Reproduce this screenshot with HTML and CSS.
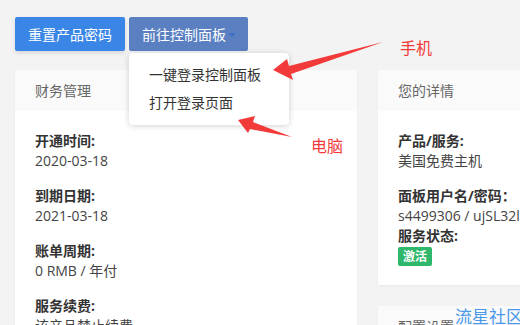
FILE: index.html
```html
<!DOCTYPE html>
<html lang="zh-CN">

<head>
    <meta charset="UTF-8">
    <meta name="viewport" content="width=device-width, initial-scale=1.0">
    <title>产品详情</title>
    <link rel="stylesheet" href="styles.css">
</head>

<body>
    <div class="page">
        <div class="toolbar">
            <a href="#" class="btn btn-primary">重置产品密码</a>
            <div class="dropdown">
                <a href="#" class="btn btn-active">前往控制面板<span class="caret"></span></a>
                <ul class="dropdown-menu">
                    <li><a href="#">一键登录控制面板</a></li>
                    <li><a href="#">打开登录页面</a></li>
                </ul>
            </div>
        </div>

        <div class="cards">
            <div class="card">
                <div class="card-header">财务管理</div>
                <div class="card-body">
                    <div class="field">
                        <div class="label">开通时间:</div>
                        <div class="value">2020-03-18</div>
                    </div>
                    <div class="field">
                        <div class="label">到期日期:</div>
                        <div class="value">2021-03-18</div>
                    </div>
                    <div class="field">
                        <div class="label">账单周期:</div>
                        <div class="value">0 RMB / 年付</div>
                    </div>
                    <div class="field">
                        <div class="label">服务续费:</div>
                        <div class="value">该产品禁止续费</div>
                    </div>
                </div>
            </div>

            <div class="column">
                <div class="card">
                    <div class="card-header">您的详情</div>
                    <div class="card-body card-body-short">
                        <div class="field">
                            <div class="label">产品/服务:</div>
                            <div class="value">美国免费主机</div>
                        </div>
                        <div class="field field-tight">
                            <div class="label">面板用户名/密码：</div>
                            <div class="value nowrap">s4499306 / ujSL32lcXw8q</div>
                        </div>
                        <div class="field">
                            <div class="label">服务状态:</div>
                            <span class="badge">激活</span>
                        </div>
                    </div>
                </div>
                <div class="card">
                    <div class="card-header">配置设置</div>
                </div>
            </div>
        </div>
    </div>

    <!-- annotations -->
    <svg class="arrows" width="520" height="325" viewBox="0 0 520 325">
        <polygon fill="#f33a3a" points="383,42 291,74 293,80 273,70 287,59 289,66" />
        <polygon fill="#f33a3a" points="292,137 250,129 248,133 238,120 255,116 253,122" />
    </svg>
    <span class="note note-phone">手机</span>
    <span class="note note-pc">电脑</span>
    <span class="watermark">流星社区</span>
</body>

</html>
```

FILE: styles.css
```css
body {
    margin: 0;
    background-color: #f3f3f3;
    font-family: "Open Sans", "Noto Sans CJK SC", sans-serif;
    font-size: 14px;
    color: #333;
    overflow: hidden;
    width: 520px;
    height: 325px;
    position: relative;
}

.page {
    padding: 17px 15px 0 15px;
}

.toolbar {
    display: flex;
    gap: 4px;
    height: 34px;
}

.btn {
    display: flex;
    align-items: center;
    height: 34px;
    padding: 0 13px;
    color: #fff;
    text-decoration: none;
    border-radius: 2px;
    font-size: 14px;
}

.btn-primary {
    background-color: #3a86e6;
    box-shadow: 0 2px 4px rgba(0, 0, 0, 0.12);
}

.btn-active {
    background-color: #5a80c2;
    padding-right: 12px;
}

.caret {
    width: 0;
    height: 0;
    margin-left: 2px;
    margin-top: 2px;
    border-left: 4px solid transparent;
    border-right: 4px solid transparent;
    border-top: 4px solid #3f6fc0;
}

.dropdown {
    position: relative;
}

.dropdown-menu {
    position: absolute;
    top: 36px;
    left: 0;
    width: 160px;
    margin: 0;
    padding: 8px 0;
    list-style: none;
    background-color: #fff;
    border-radius: 4px;
    box-shadow: 0 1px 6px rgba(0, 0, 0, 0.18);
    z-index: 10;
}

.dropdown-menu a {
    display: block;
    padding: 0 20px;
    line-height: 28px;
    color: #333;
    text-decoration: none;
    white-space: nowrap;
}

.cards {
    display: flex;
    gap: 21px;
    margin-top: 19px;
    width: 720px;
}

.column {
    display: flex;
    flex-direction: column;
    gap: 21px;
    width: 342px;
}

.card {
    width: 342px;
    background-color: #fff;
    box-shadow: 0 1px 2px rgba(0, 0, 0, 0.05);
}

.card-header {
    height: 41px;
    line-height: 41px;
    padding: 0 20px;
    background-color: #fafafa;
    color: #666;
}

.card-body {
    padding: 20px 20px 40px 20px;
}

.card-body-short {
    padding-bottom: 19px;
}

.field {
    margin-bottom: 15px;
    line-height: 20px;
}

.field:last-child {
    margin-bottom: 0;
}

.field-tight {
    margin-bottom: 0;
}

.label {
    font-weight: bold;
    color: #333;
}

.value {
    color: #444;
}

.nowrap {
    white-space: nowrap;
}

.badge {
    display: inline-block;
    margin-top: 1px;
    padding: 0 5px;
    height: 19px;
    line-height: 19px;
    background-color: #2fb86c;
    color: #fff;
    font-size: 12px;
    font-weight: bold;
    border-radius: 2px;
}

.arrows {
    position: absolute;
    top: 0;
    left: 0;
    z-index: 20;
}

.note {
    position: absolute;
    color: #f23a3a;
    font-size: 16px;
    line-height: 18px;
    z-index: 20;
}

.note-phone {
    left: 400px;
    top: 39px;
}

.note-pc {
    left: 311px;
    top: 137px;
}

.watermark {
    position: absolute;
    left: 455px;
    top: 308px;
    font-size: 17px;
    line-height: 17px;
    color: #4a98ea;
    white-space: nowrap;
    z-index: 20;
}
```
